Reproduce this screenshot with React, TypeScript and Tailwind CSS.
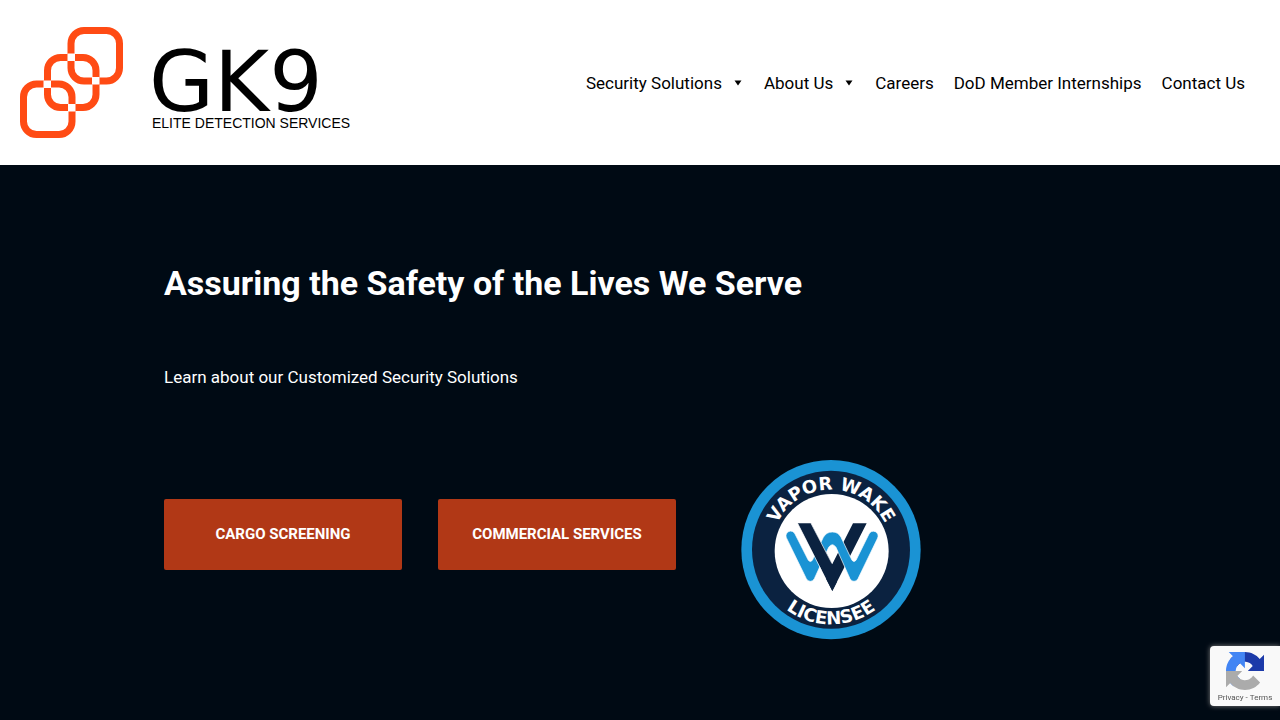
import React from 'react';

interface MenuItem {
  label: string;
  hasChildren?: boolean;
}

const menuItems: MenuItem[] = [
  { label: 'Security Solutions', hasChildren: true },
  { label: 'About Us', hasChildren: true },
  { label: 'Careers' },
  { label: 'DoD Member Internships' },
  { label: 'Contact Us' },
];

const services = ['Cargo Screening', 'Commercial Services'];

const Logo = () => (
  <a href="#" aria-label="GK9 Elite Detection Services" className="shrink-0">
    <svg width="332" height="111" viewBox="20 27 332 111">
      {/* Chain links */}
      <g fill="none" stroke="#ff4b14" strokeWidth="7">
        <rect x="23.5" y="84" width="48.5" height="50.5" rx="13" />
        <rect x="47.5" y="57.5" width="48.5" height="50" rx="13" />
        <rect x="71" y="30.5" width="48.5" height="50.5" rx="13" />
      </g>
      <g fill="#fff">
        <rect x="43.5" y="80.5" width="7.5" height="7.5" />
        <rect x="68" y="104" width="7.5" height="7.5" />
        <rect x="67.5" y="53.5" width="7.5" height="7.5" />
        <rect x="92" y="77" width="7.5" height="7.5" />
      </g>
      <text x="149" y="111" fontSize="84" fontFamily="DejaVu Sans, sans-serif">GK9</text>
      <text x="152" y="128" fontSize="14" fontFamily="Liberation Sans, sans-serif">ELITE DETECTION SERVICES</text>
    </svg>
  </a>
);

const VaporWakeBadge = () => (
  <svg width="180" height="180" viewBox="18 14 540 540" role="img" aria-label="Vapor Wake Licensee">
    <defs>
      <path id="badge-top" d="M108 283 A180 180 0 0 1 468 283" />
      <path id="badge-bottom" d="M64 283 A224 224 0 0 0 512 283" />
    </defs>
    <circle cx="288" cy="283" r="269" fill="#1a93d4" />
    <circle cx="288" cy="283" r="237" fill="#0b2240" />
    <circle cx="290" cy="287" r="171" fill="#fff" />
    <g fill="#fff" fontFamily="DejaVu Sans, sans-serif" fontWeight="700" textAnchor="middle">
      <text fontSize="54">
        <textPath href="#badge-top" startOffset="50%">VAPOR WAKE</textPath>
      </text>
      <text fontSize="54">
        <textPath href="#badge-bottom" startOffset="50%">LICENSEE</textPath>
      </text>
    </g>
    {/* Interlaced emblem: right arm, ribbon, then left arm on top */}
    <path d="M354 204H395L292 407L260 344L292 326Z" fill="#0b2240" />
    <path
      d="M154 247A14 14 0 0 1 180 236L220 315Q226 322 232 315L265 246Q274 230 292 230Q310 230 318 246L351 315Q357 322 363 315L402 236A14 14 0 0 1 428 248L369 370Q365 378 357 378Q349 378 345 370L303 276Q292 260 281 276L238 370Q234 378 226 378Q218 378 214 370Z"
      fill="#1a93d4"
      stroke="#fff"
      strokeWidth="2"
    />
    <path d="M188 204H228L292 326L306 379L292 407Z" fill="#0b2240" />
    <path d="M188 204L272 370M228 204L291 325" stroke="#fff" strokeWidth="2" />
  </svg>
);

const RecaptchaBadge = () => (
  <div className="fixed right-0 bottom-3.5 flex h-15 w-[70px] flex-col items-center rounded-l bg-[#f9f9f9] pt-1.5 shadow-[0_0_5px_gray]">
    <svg width="38" height="38" viewBox="0 0 64 64">
      <path
        fill="#1c3aa9"
        d="M64 31.955l-.033-1.37V4.687l-7.16 7.16C50.948 4.674 42.033.093 32.05.093c-10.4 0-19.622 4.96-25.458 12.64l11.736 11.86a15.55 15.55 0 0 1 4.754-5.334c2.05-1.6 4.952-2.906 8.968-2.906.485 0 .86.057 1.135.163 4.976.393 9.288 3.14 11.828 7.124l-8.307 8.307L64 31.953"
      />
      <path
        fill="#4285f4"
        d="M31.862.094l-1.37.033H4.594l7.16 7.16C4.58 13.147 0 22.06 0 32.046c0 10.4 4.96 19.622 12.64 25.458L24.5 45.768a15.55 15.55 0 0 1-5.334-4.754c-1.6-2.05-2.906-4.952-2.906-8.968 0-.485.057-.86.163-1.135.393-4.976 3.14-9.288 7.124-11.828l8.307 8.307L31.86.095"
      />
      <path
        fill="#ababab"
        d="M.001 32.045l.033 1.37v25.898l7.16-7.16c5.86 7.173 14.774 11.754 24.76 11.754 10.4 0 19.622-4.96 25.458-12.64l-11.736-11.86a15.55 15.55 0 0 1-4.754 5.334c-2.05 1.6-4.952 2.906-8.968 2.906-.485 0-.86-.057-1.135-.163-4.976-.393-9.288-3.14-11.828-7.124l8.307-8.307c-10.522.04-22.4.066-27.295-.005"
      />
    </svg>
    <div className="flex gap-0.5 text-[8px] leading-4 whitespace-nowrap text-[#555]">
      <a href="#">Privacy</a>
      <span>-</span>
      <a href="#">Terms</a>
    </div>
  </div>
);

export default function App() {
  return (
    <div className="flex min-h-screen flex-col bg-[#000a14] font-['Roboto',sans-serif]">
      <header className="flex flex-wrap items-center justify-between bg-white py-[27px] pr-[25px] pl-5">
        <Logo />
        <nav>
          <ul className="flex flex-wrap text-[17px] leading-6 text-black">
            {menuItems.map((item) => (
              <li key={item.label}>
                <a href="#" className="flex items-center gap-3 px-2.5">
                  {item.label}
                  {item.hasChildren && (
                    <svg width="8" height="6" viewBox="0 0 8 6" className="mr-0.5" aria-hidden="true">
                      <path d="M0.5 0.5H7.5L4 5.5Z" />
                    </svg>
                  )}
                </a>
              </li>
            ))}
          </ul>
        </nav>
      </header>

      <main className="px-6 pt-24 pb-20 text-white lg:pl-[164px]">
        <h1 className="text-[34px] leading-11 font-bold">Assuring the Safety of the Lives We Serve</h1>
        <p className="mt-[60px] text-[17px] leading-6">Learn about our Customized Security Solutions</p>
        <div className="mt-[71px] grid max-w-[786px] grid-cols-3 items-center gap-9">
          {services.map((service) => (
            <a
              key={service}
              href="#"
              className="-mt-8 flex h-[71px] items-center justify-center rounded-xs bg-[#b13816] text-[15px] font-bold uppercase"
            >
              {service}
            </a>
          ))}
          <div className="flex justify-center">
            <VaporWakeBadge />
          </div>
        </div>
      </main>

      <RecaptchaBadge />
    </div>
  );
}
